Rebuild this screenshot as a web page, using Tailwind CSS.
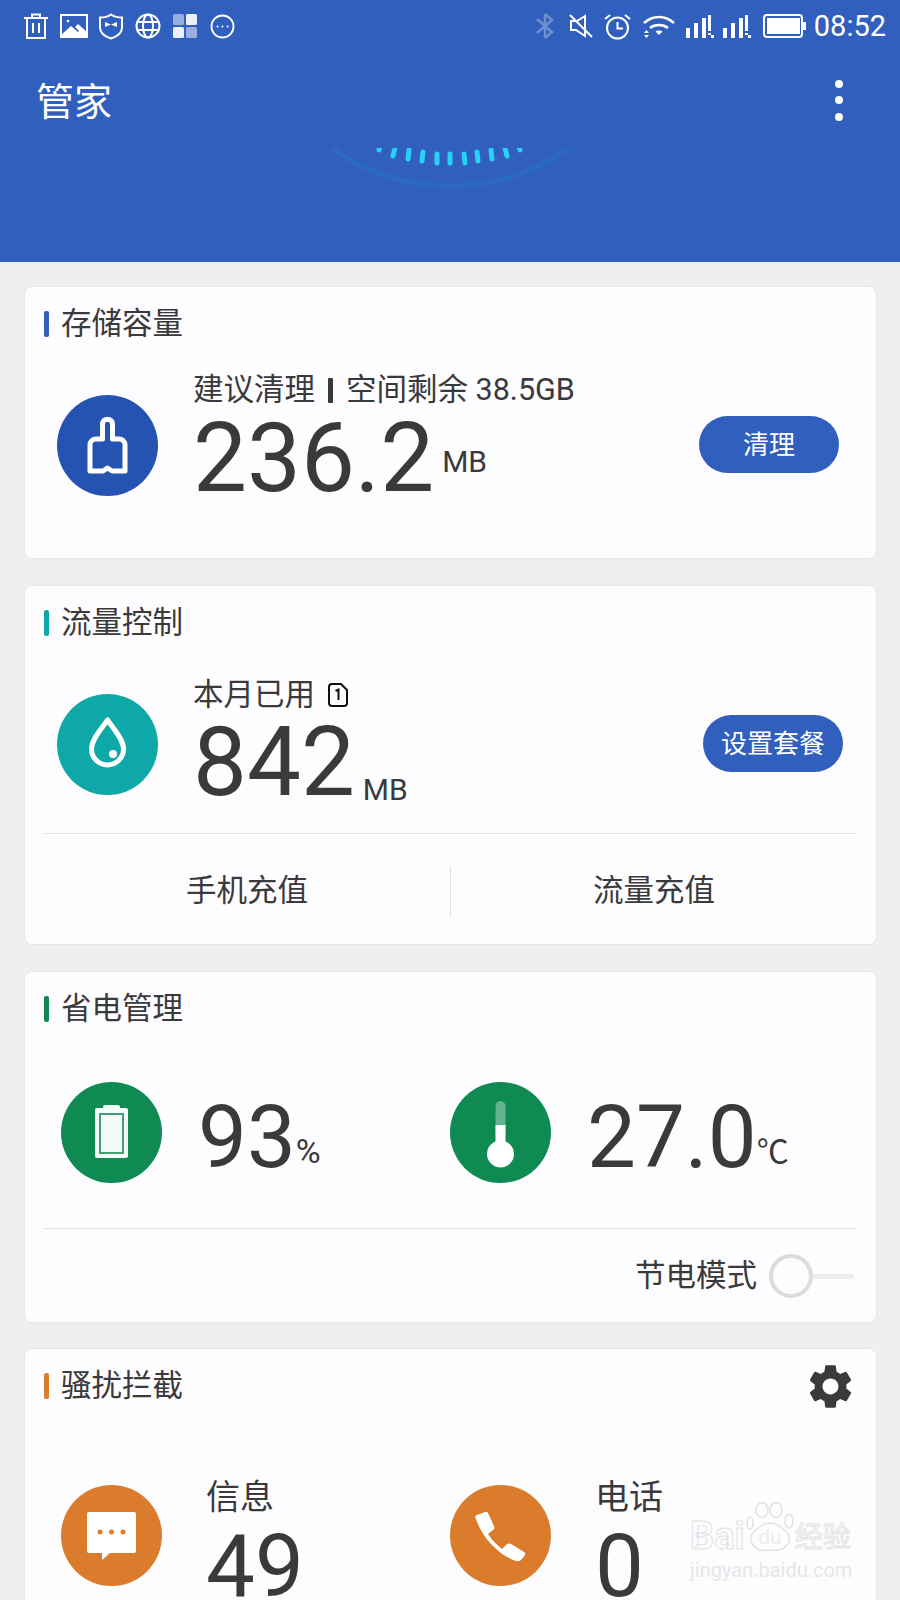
<!DOCTYPE html>
<html lang="zh-CN">
<head>
    <meta charset="UTF-8">
    <title>管家</title>
    <script src="https://cdn.jsdelivr.net/npm/@tailwindcss/browser@4"></script>
</head>
<body class="bg-[#efeff1] font-['Roboto','Noto_Sans_CJK_SC',sans-serif] text-[#3a393c]">
<div class="relative h-[1600px] overflow-hidden">

    <!-- Header -->
    <header class="h-[262px] bg-[#305fbd] text-white flex flex-col">
        <!-- Status bar -->
        <div class="h-[52px] flex items-center pl-[23px] pr-[14px]">
            <div class="flex items-center gap-[11px]">
                <svg class="w-[26px] h-[26px]" viewBox="0 0 26 26" fill="none" stroke="white" stroke-width="2"><path d="M1 5h24M4 5v20h18V5M9 5V1.500h8V5M10 10v10M16 10v10"/></svg>
                <svg class="w-[28px] h-[24px]" viewBox="0 0 28 24"><rect x="1" y="1" width="26" height="22" fill="none" stroke="white" stroke-width="2"/><path d="M1 23v-2l10-9 7 6 1-1-4-4 3-3 9 8v5z" fill="white"/><circle cx="8" cy="7" r="1.300" fill="white"/></svg>
                <svg class="w-[26px] h-[27px] ml-[-1px]" viewBox="0 0 26 27" fill="none" stroke="white" stroke-width="2"><path d="M13 1.500c3 2 7 3 11 3v10c0 5-5 9-11 11C7 23.500 2 19.500 2 14.500v-10c4 0 8-1 11-3z"/><path d="M7 9l6 2.500L19 9v5l-6-2.500L7 14z" fill="white" stroke="none"/></svg>
                <svg class="w-[26px] h-[26px]" viewBox="0 0 26 26" fill="none" stroke="white" stroke-width="2"><circle cx="13" cy="13" r="11.500"/><ellipse cx="13" cy="13" rx="5" ry="11.500"/><path d="M2 9h22M2 17h22"/></svg>
                <svg class="w-[26px] h-[26px]" viewBox="0 0 26 26"><rect x="1" y="1" width="11" height="11" rx="1.500" fill="white" fill-opacity=".5"/><rect x="14" y="1" width="11" height="11" rx="1.500" fill="white" fill-opacity=".9"/><rect x="1" y="14" width="11" height="11" rx="1.500" fill="white" fill-opacity=".9"/><rect x="14" y="14" width="11" height="11" rx="1.500" fill="white" fill-opacity=".5"/></svg>
                <svg class="w-[25px] h-[25px] ml-[1px]" viewBox="0 0 25 25" fill="none" stroke="white" stroke-width="1.800"><circle cx="12.500" cy="12.500" r="11"/><circle cx="7.500" cy="12.500" r="1" fill="white" stroke="none"/><circle cx="12.500" cy="12.500" r="1" fill="white" stroke="none"/><circle cx="17.500" cy="12.500" r="1" fill="white" stroke="none"/></svg>
            </div>
            <div class="ml-auto flex items-center">
                <svg class="w-[20px] h-[28px] opacity-30" viewBox="0 0 20 28" fill="none" stroke="white" stroke-width="2.500"><path d="M10 2v24M2 7l16 14M18 7L2 21M10 2l6 5M10 26l6-5"/></svg>
                <svg class="w-[24px] h-[26px] ml-[14px]" viewBox="0 0 24 26" fill="none" stroke="white" stroke-width="2"><path d="M1 2l22 22M16 3L8 8H2v9h5l9 6z"/></svg>
                <svg class="w-[27px] h-[27px] ml-[11px]" viewBox="0 0 27 27" fill="none" stroke="white" stroke-width="2"><circle cx="13.500" cy="15" r="10.500"/><path d="M13.500 9v6.500H19"/><path d="M1 6l5-4M26 6l-5-4"/></svg>
                <svg class="w-[32px] h-[26px] ml-[12px]" viewBox="0 0 32 26" fill="none" stroke="white" stroke-width="2.500"><path d="M1 10c9-8 21-8 30 0M7 15c5-4 13-4 18 0"/><path d="M16 22l-3.500-3.500c2-1.500 5-1.500 7 0z" fill="white" stroke="none"/><path d="M1 20h5l-2.500-3zM1 22h5l-2.500 3z" fill="white" stroke="none"/></svg>
                <svg class="w-[30px] h-[23px] ml-[11px]" viewBox="0 0 30 23" fill="white"><rect x="0" y="13" width="4" height="10"/><rect x="8" y="8" width="4" height="15"/><rect x="16" y="3" width="4" height="20"/><rect x="22" y="0" width="3" height="16"/><rect x="22" y="18" width="3" height="2"/><rect x="25" y="20" width="3" height="3"/></svg>
                <svg class="w-[30px] h-[23px] ml-[7px]" viewBox="0 0 30 23" fill="white"><rect x="0" y="13" width="4" height="10"/><rect x="8" y="8" width="4" height="15"/><rect x="16" y="3" width="4" height="20"/><rect x="22" y="0" width="3" height="16"/><rect x="22" y="18" width="3" height="2"/><rect x="25" y="20" width="3" height="3"/></svg>
                <svg class="w-[44px] h-[24px] ml-[10px]" viewBox="0 0 44 24"><rect x="1" y="1" width="38" height="22" rx="3" fill="none" stroke="white" stroke-width="2"/><rect x="4" y="4" width="33" height="16" fill="white"/><rect x="40" y="8" width="3" height="8" fill="white"/></svg>
                <span class="ml-[7px] text-[29px] leading-none">08:52</span>
            </div>
        </div>
        <!-- Toolbar -->
        <div class="h-[96px] flex items-center justify-between pl-[36px] pr-[57px]">
            <h1 class="text-[38px] leading-none font-normal pt-[3px]">管家</h1>
            <div class="flex flex-col gap-[8.500px]">
                <span class="w-[8px] h-[8px] rounded-full bg-white"></span>
                <span class="w-[8px] h-[8px] rounded-full bg-white"></span>
                <span class="w-[8px] h-[8px] rounded-full bg-white"></span>
            </div>
        </div>
        <!-- Gauge -->
        <svg class="w-[260px] h-[42px] mx-auto" viewBox="320 149 260 42" fill="none">
            <path d="M330 147C395 200 505 200 570 147" stroke="#2a69c4" stroke-width="5"/>
            <g stroke="#28d2f6" stroke-width="5" stroke-linecap="round">
                <path d="M380 146l-1 5M395 149l-2 8M409 151l-1 9M423 153l-1 9M437 155v9M450 155v9M464 155l1 9M477 153l1 9M491 151l1 9M505 149l2 8M519 146l1 5"/>
            </g>
        </svg>
    </header>

    <!-- Cards -->
    <main class="pl-[24px] pr-[23px] pt-[24px] flex flex-col">

        <!-- 存储容量 -->
        <section class="h-[273px] mb-[26px] rounded-[8px] bg-[#fdfcfe] border border-[#e6e6e8] pt-[21px]">
            <div class="flex items-center h-[32px] pl-[19px] gap-[12px]">
                <span class="w-[5px] h-[26px] rounded-[2px] bg-[#305fbd]"></span>
                <h2 class="text-[30.500px] leading-none font-normal">存储容量</h2>
            </div>
            <div class="flex items-start pl-[32px] pr-[37px] mt-[20px]">
                <div class="w-[101px] h-[101px] mt-[35px] rounded-full bg-[#2553b2] flex items-center justify-center">
                    <svg class="w-[101px] h-[101px]" viewBox="0 0 101 101" fill="none" stroke="white" stroke-width="5" stroke-linejoin="round"><path d="M33 76V50c0-4 3-6 6-6h6.500V29c0-6.500 10-6.500 10 0v15H62c3 0 6 2 6 6v26H55l-4.500-3-4.500 3z"/></svg>
                </div>
                <div class="ml-[35px] mt-[15px]">
                    <p class="text-[30.500px] leading-[30px] flex items-center">建议清理<span class="w-[5px] h-[25px] mx-[13px] rounded-[1px] bg-[#3a393c]"></span>空间剩余 38.5GB</p>
                    <div class="flex items-end mt-[5px]">
                        <span class="text-[96px] leading-none">236.2</span>
                        <span class="text-[30px] leading-none ml-[8px] mb-[29px]">MB</span>
                    </div>
                </div>
                <button class="ml-auto mt-[56px] w-[140px] h-[57px] rounded-full bg-[#305fbd] text-white text-[26px] leading-none">清理</button>
            </div>
        </section>

        <!-- 流量控制 -->
        <section class="h-[360px] mb-[26px] rounded-[8px] bg-[#fdfcfe] border border-[#e6e6e8] pt-[21px]">
            <div class="flex items-center h-[32px] pl-[19px] gap-[12px]">
                <span class="w-[5px] h-[26px] rounded-[2px] bg-[#0fa8a8]"></span>
                <h2 class="text-[30.500px] leading-none font-normal">流量控制</h2>
            </div>
            <div class="flex items-start pl-[32px] pr-[33px] mt-[19px] h-[175px]">
                <div class="w-[101px] h-[101px] mt-[36px] rounded-full bg-[#0fa8a8] flex items-center justify-center">
                    <svg class="w-[101px] h-[101px]" viewBox="0 0 101 101" fill="none" stroke="white" stroke-width="5"><path d="M50.500 26c-6 9-16 19-16 29a16 16 0 0 0 32 0c0-10-10-20-16-29z" stroke-linejoin="round"/><circle cx="56" cy="60" r="4" fill="white" stroke="none"/></svg>
                </div>
                <div class="ml-[35px] mt-[22px]">
                    <p class="text-[30.500px] leading-[30px] flex items-center">本月已用
                        <svg class="w-[21px] h-[24px] ml-[12px]" viewBox="0 0 21 24" fill="none"><path d="M2 4a3 3 0 0 1 3-3h9l6 6v13a3 3 0 0 1-3 3H5a3 3 0 0 1-3-3z" stroke="#111" stroke-width="2"/><path d="M8.500 8l3-1.500V17" stroke="#111" stroke-width="2"/></svg>
                    </p>
                    <div class="flex items-end mt-[4px]">
                        <span class="text-[96px] leading-none">842</span>
                        <span class="text-[30px] leading-none ml-[8px] mb-[5px]">MB</span>
                    </div>
                </div>
                <button class="ml-auto mt-[57px] w-[140px] h-[57px] rounded-full bg-[#305fbd] text-white text-[26px] leading-none">设置套餐</button>
            </div>
            <div class="mx-[19px] border-t border-[#dfdfe1]"></div>
            <div class="flex items-center h-[114px] mx-[19px]">
                <div class="flex-1 text-center text-[30.500px] leading-none">手机充值</div>
                <span class="w-px h-[50px] bg-[#dfdfe1]"></span>
                <div class="flex-1 text-center text-[30.500px] leading-none">流量充值</div>
            </div>
        </section>

        <!-- 省电管理 -->
        <section class="h-[352px] mb-[25px] rounded-[8px] bg-[#fdfcfe] border border-[#e6e6e8] pt-[21px]">
            <div class="flex items-center h-[32px] pl-[19px] gap-[12px]">
                <span class="w-[5px] h-[26px] rounded-[2px] bg-[#0e8a52]"></span>
                <h2 class="text-[30.500px] leading-none font-normal">省电管理</h2>
            </div>
            <div class="flex pl-[36px] mt-[57px] h-[146px]">
                <div class="w-[389px] flex items-start">
                    <div class="w-[101px] h-[101px] rounded-full bg-[#0e8a52] flex items-center justify-center">
                        <svg class="w-[101px] h-[101px]" viewBox="0 0 101 101"><path d="M34 28a2 2 0 0 1 2-2h6v-1a2 2 0 0 1 2-2h13a2 2 0 0 1 2 2v1h6a2 2 0 0 1 2 2v46a2 2 0 0 1-2 2H36a2 2 0 0 1-2-2z" fill="#f5fbf8"/><rect x="39" y="32" width="23" height="39" fill="#f5fbf8" stroke="#4a9b78" stroke-width="2"/></svg>
                    </div>
                    <div class="ml-[36px] mt-[12px] flex items-end">
                        <span class="text-[87px] leading-none">93</span>
                        <span class="text-[34px] leading-none mb-[13px]">%</span>
                    </div>
                </div>
                <div class="flex items-start">
                    <div class="w-[101px] h-[101px] rounded-full bg-[#0e8a52] flex items-center justify-center">
                        <svg class="w-[101px] h-[101px]" viewBox="0 0 101 101"><rect x="45.500" y="19" width="10" height="40" rx="5" fill="white" fill-opacity=".35"/><rect x="45.500" y="43" width="10" height="40" fill="white"/><circle cx="50.500" cy="72" r="13.500" fill="white"/></svg>
                    </div>
                    <div class="ml-[36px] mt-[12px] flex items-end">
                        <span class="text-[87px] leading-none">27.0</span>
                        <span class="text-[32px] leading-none mb-[13px]">℃</span>
                    </div>
                </div>
            </div>
            <div class="mx-[19px] border-t border-[#dfdfe1]"></div>
            <div class="flex items-center justify-end h-[94px] pr-[22px]">
                <span class="text-[30.500px] leading-none">节电模式</span>
                <div class="flex items-center ml-[12px]">
                    <span class="w-[44px] h-[44px] rounded-full border-[4px] border-[#dcdcde] bg-[#fdfcfe]"></span>
                    <span class="w-[41px] h-[5px] rounded-r-full bg-[#ececee]"></span>
                </div>
            </div>
        </section>

        <!-- 骚扰拦截 -->
        <section class="h-[300px] rounded-[8px] bg-[#fdfcfe] border border-[#e6e6e8] pt-[21px]">
            <div class="flex items-center h-[32px] pl-[19px] gap-[12px] pr-[19px]">
                <span class="w-[5px] h-[26px] rounded-[2px] bg-[#da7c2c]"></span>
                <h2 class="text-[30.500px] leading-none font-normal">骚扰拦截</h2>
                <svg class="w-[53px] h-[53px] ml-auto" viewBox="0 0 24 24" fill="#3a393c"><path d="M19.140 12.940c.04-.3.06-.61.06-.94 0-.32-.02-.64-.07-.94l2.030-1.580c.18-.14.23-.41.12-.61l-1.920-3.320c-.12-.22-.37-.29-.59-.22l-2.390.96c-.5-.38-1.030-.7-1.620-.94l-.36-2.540c-.04-.24-.24-.41-.48-.41h-3.840c-.24 0-.43.17-.47.41l-.36 2.540c-.59.24-1.130.57-1.620.94l-2.390-.96c-.22-.08-.47 0-.59.22L2.740 8.870c-.12.21-.08.47.12.61l2.030 1.580c-.05.3-.09.63-.09.94s.02.64.07.94l-2.030 1.580c-.18.14-.23.41-.12.61l1.920 3.320c.12.22.37.29.59.22l2.390-.96c.5.38 1.030.7 1.620.94l.36 2.540c.05.24.24.41.48.41h3.840c.24 0 .44-.17.47-.41l.36-2.540c.59-.24 1.130-.56 1.620-.94l2.390.96c.22.08.47 0 .59-.22l1.920-3.320c.12-.22.07-.47-.12-.61l-2.010-1.580zM12 15.600c-1.980 0-3.600-1.620-3.600-3.600s1.620-3.600 3.600-3.600 3.600 1.620 3.600 3.600-1.620 3.600-3.600 3.600z"/></svg>
            </div>
            <div class="flex pl-[36px] mt-[56px]">
                <div class="w-[389px] flex items-start">
                    <div class="w-[101px] h-[101px] mt-[27px] rounded-full bg-[#da7c2c] flex items-center justify-center">
                        <svg class="w-[101px] h-[101px]" viewBox="0 0 101 101"><path d="M26 29a2 2 0 0 1 2-2h45a2 2 0 0 1 2 2v37a2 2 0 0 1-2 2H49l-8 7v-7H28a2 2 0 0 1-2-2z" fill="white"/><circle cx="39" cy="47" r="2.500" fill="#da7c2c"/><circle cx="50.500" cy="47" r="2.500" fill="#da7c2c"/><circle cx="62" cy="47" r="2.500" fill="#da7c2c"/></svg>
                    </div>
                    <div class="ml-[44px] mt-[22px]">
                        <p class="text-[34px] leading-none">信息</p>
                        <p class="text-[87px] leading-none mt-[9px]">49</p>
                    </div>
                </div>
                <div class="flex items-start">
                    <div class="w-[101px] h-[101px] mt-[27px] rounded-full bg-[#da7c2c] flex items-center justify-center">
                        <svg class="w-[101px] h-[101px]" viewBox="0 0 101 101" fill="white"><path d="M26 34q-2-3 1-4l8-3q2-1 3 1l6 13q1 3-1 4l-5 4q5 8 14 15l5-5q2-1 4 0l13 8q2 1 1 3l-4 5q-2 2-5 1C48 70 32 52 26 34z"/></svg>
                    </div>
                    <div class="ml-[44px] mt-[22px]">
                        <p class="text-[34px] leading-none">电话</p>
                        <p class="text-[87px] leading-none mt-[9px]">0</p>
                    </div>
                </div>
            </div>
        </section>
    </main>

    <!-- Baidu watermark over the card -->
    <div class="absolute left-[690px] top-[1502px] w-[166px] text-[#e6e6e8]">
        <div class="flex items-end h-[53px]">
            <span class="text-[38px] leading-none font-bold text-transparent [-webkit-text-stroke:1px_#e2e2e4]">Bai</span>
            <svg class="w-[50px] h-[53px] shrink-0" viewBox="0 0 50 53" fill="none" stroke="#e2e2e4" stroke-width="1.500">
                <path d="M8 43c-7-8 2-15 8-19 5-4 13-4 18 0 6 4 15 11 8 19-5 6-10 6-17 5-7 1-12 1-17-5z"/>
                <ellipse cx="5" cy="21" rx="3" ry="6"/>
                <ellipse cx="17" cy="8" rx="6" ry="7.500"/>
                <ellipse cx="31" cy="8" rx="6" ry="7.500"/>
                <ellipse cx="44" cy="19" rx="4" ry="7"/>
                <text x="25" y="42" text-anchor="middle" font-size="21" fill="#ececee" stroke="none">du</text>
            </svg>
            <span class="text-[28px] leading-[34px] text-transparent [-webkit-text-stroke:1px_#e2e2e4]">经验</span>
        </div>
        <div class="text-[20px] leading-none mt-[5px]">jingyan.baidu.com</div>
    </div>
</div>
</body>
</html>
